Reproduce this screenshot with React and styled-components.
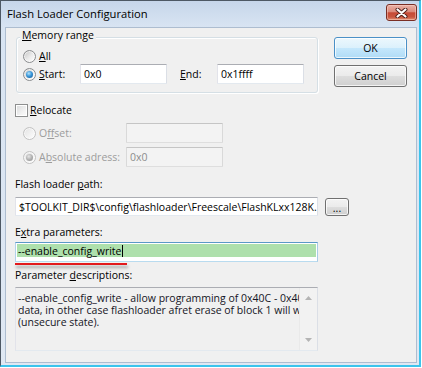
import React from 'react';
import styled, { createGlobalStyle } from 'styled-components';

const GlobalStyle = createGlobalStyle`
  html, body { margin: 0; padding: 0; background: #ffffff; }
  body {
    width: 422px; height: 368px; overflow: hidden;
    font-family: "Open Sans", "Noto Sans", sans-serif;
    -webkit-font-smoothing: antialiased;
  }
`;

const Frame = styled.div`
  box-sizing: border-box;
  width: 421px;
  height: 367px;
  display: flex;
  flex-direction: column;
  border-left: 1px solid #4d5864;
  border-top: 1px solid #4d5864;
  border-right: 2px solid #3cc4ec;
  border-bottom: 2px solid #3cc4ec;
  background: linear-gradient(180deg, #c6d6ea 0px, #d8e4f2 26px, #dfe8f3 100%);
  padding: 0 2px 2px 4px;
`;

const TitleBar = styled.div`
  height: 26px;
  flex: none;
  display: flex;
  align-items: flex-start;
  justify-content: space-between;
  margin-left: -4px;
  padding-left: 6px;
`;

const Title = styled.div`
  font-size: 11.2px;
  line-height: 14px;
  margin-top: 6px;
  color: #000;
`;

const CloseButton = styled.div`
  box-sizing: border-box;
  width: 31px;
  height: 17px;
  margin-top: 3px;
  border: 1px solid #7a2e24;
  border-radius: 3px;
  background: linear-gradient(180deg, #eab1a6 0%, #db8a7b 45%, #c64a35 52%, #c9563f 80%, #e19273 100%);
  box-shadow: inset 0 0 0 1px rgba(255, 220, 210, 0.45), 0 0 1px rgba(255,255,255,0.8);
  display: flex;
  align-items: center;
  justify-content: center;
`;

const Client = styled.div`
  flex: 1;
  box-sizing: border-box;
  border: 1px solid #adbdd0;
  background: #f0f0f0;
  padding: 9px 0 0 9px;
  display: flex;
  flex-direction: column;
  align-items: flex-start;
  font-size: 10.5px;
  line-height: 14px;
  color: #000;
`;

const TopSection = styled.div`
  display: flex;
  align-items: flex-start;
`;

const GroupBox = styled.div`
  position: relative;
  box-sizing: border-box;
  margin-left: 1px;
  width: 302px;
  height: 56px;
  border: 1px solid #d5dfe5;
  border-radius: 3px;
  box-shadow: inset 1px 1px 0 #ffffff, 1px 1px 0 #ffffff;
  padding: 11px 0 0 6px;
  display: flex;
  flex-direction: column;
  gap: 1px;
`;

const Legend = styled.span`
  position: absolute;
  top: -10px;
  left: 3px;
  padding: 0 2px;
  background: #f0f0f0;
  line-height: 14px;
`;

const Key = styled.span`
  text-decoration: underline;
  text-underline-offset: 1px;
  text-decoration-thickness: 1px;
`;

const OptionRow = styled.div`
  display: flex;
  align-items: center;
  height: ${p => p.$h || 14}px;
`;

const RadioLabel = styled.label`
  display: flex;
  align-items: center;
  gap: 3px;
  width: ${p => (p.$w ? `${p.$w}px` : 'auto')};
  flex: none;
  color: ${p => (p.$disabled ? '#9c9c9c' : '#000')};
`;

const Radio = styled.span`
  box-sizing: border-box;
  width: 13px;
  height: 13px;
  flex: none;
  border-radius: 50%;
  border: 1px solid ${p => (p.$disabled ? '#c2c2c2' : '#8a8c8e')};
  background: ${p =>
    p.$disabled
      ? 'linear-gradient(135deg, #e2e2e2 0%, #f6f6f6 70%, #fbfbfb 100%)'
      : 'linear-gradient(135deg, #c4c4c4 0%, #ececec 55%, #ffffff 100%)'};
  box-shadow: inset 0 0 0 1px rgba(255, 255, 255, 0.6);
  display: flex;
  align-items: center;
  justify-content: center;
  &::after {
    content: '';
    display: ${p => (p.$checked ? 'block' : 'none')};
    width: 7px;
    height: 7px;
    border-radius: 50%;
    background: ${p =>
      p.$disabled
        ? 'radial-gradient(circle at 40% 35%, #e6e6e6 0%, #b2b2b2 50%, #8e8e8e 100%)'
        : 'radial-gradient(circle at 40% 35%, #b4e3fb 0%, #3b98da 45%, #0c4f8c 100%)'};
  }
`;

const FieldLabel = styled.span`
  width: ${p => p.$w}px;
  margin-left: ${p => p.$ml || 0}px;
  flex: none;
`;

const TextBox = styled.div`
  box-sizing: border-box;
  width: ${p => p.$w}px;
  height: ${p => p.$h || 20}px;
  flex: none;
  border: 1px solid;
  border-color: ${p =>
    p.$disabled ? '#c5c5c5 #d9d9d9 #dedede #d9d9d9' : '#abadb3 #dbdfe6 #e3e9ef #e2e3ea'};
  border-radius: 1px;
  background: ${p => (p.$disabled ? '#f3f3f3' : '#ffffff')};
  color: ${p => (p.$disabled ? '#8d8d8d' : '#000')};
  padding: 0 3px;
  display: flex;
  align-items: center;
  overflow: hidden;
  white-space: nowrap;
`;

const FocusBox = styled.div`
  box-sizing: border-box;
  width: 303px;
  height: 20px;
  margin-top: 3px;
  border: 1px solid;
  border-color: #5b98c7 #a9cce6 #b9dbef #b2d2ea;
  background: #ffffff;
  padding: 1px;
`;

const Highlight = styled.div`
  height: 13px;
  background: #aee0ac;
  display: flex;
  align-items: center;
  padding-left: 1px;
  white-space: nowrap;
`;

const Caret = styled.span`
  width: 1px;
  height: 12px;
  background: #000;
  margin-left: 1px;
`;

const ButtonColumn = styled.div`
  display: flex;
  flex-direction: column;
  gap: 6px;
  margin-left: 16px;
`;

const Button = styled.div`
  box-sizing: border-box;
  width: ${p => p.$w || 73}px;
  height: ${p => p.$h || 22}px;
  border: 1px solid ${p => (p.$default ? '#4a90c7' : '#707070')};
  border-radius: 3px;
  background: ${p =>
    p.$default
      ? 'linear-gradient(180deg, #ecf7fd 0%, #dcf1fc 48%, #c4e7fc 52%, #b0dcf6 100%)'
      : 'linear-gradient(180deg, #f3f3f3 0%, #ebebeb 48%, #dddddd 52%, #cfcfcf 100%)'};
  box-shadow: inset 0 0 0 1px rgba(255, 255, 255, 0.75);
  display: flex;
  align-items: center;
  justify-content: center;
  color: #000;
  line-height: ${p => (p.$low ? '10px' : '14px')};
  padding-top: ${p => (p.$low ? '3px' : '0')};
  flex: none;
`;

const CheckRow = styled.label`
  display: flex;
  align-items: center;
  gap: 2px;
  height: 14px;
  margin-top: 10px;
`;

const CheckBox = styled.span`
  box-sizing: border-box;
  width: 13px;
  height: 13px;
  border: 1px solid #8e8f8f;
  background: linear-gradient(135deg, #d9dadb 0%, #f1f1f1 60%, #fdfdfd 100%);
  box-shadow: inset 0 0 0 1px #ffffff;
  flex: none;
`;

const SubGrid = styled.div`
  display: grid;
  grid-template-columns: 103px 97px;
  grid-auto-rows: 20px;
  row-gap: 4px;
  align-items: center;
  padding-left: 8px;
  margin-top: 6px;
`;

const Label = styled.div`
  margin-top: ${p => p.$mt}px;
  line-height: 14px;
`;

const PathRow = styled.div`
  display: flex;
  align-items: center;
  gap: 7px;
  margin-top: 6px;
`;

const Annotation = styled.div`
  width: 112px;
  height: 2px;
  margin-top: 1px;
  background: #e3191c;
  box-shadow: 1px 3px 3px rgba(70, 70, 70, 0.45);
`;

const DescBox = styled.div`
  box-sizing: border-box;
  width: 303px;
  height: 64px;
  margin-top: 5px;
  border: 1px solid;
  border-color: #abadb3 #dbdfe6 #e3e9ef #e2e3ea;
  background: #f0f0f0;
  display: flex;
`;

const DescText = styled.div`
  flex: 1;
  overflow: hidden;
  white-space: nowrap;
  padding: 4px 0 0 2px;
  line-height: 12px;
  color: #151525;
`;

const ScrollBar = styled.div`
  width: 17px;
  flex: none;
  background: #f2f2f2;
  border-left: 1px solid #e9e9e9;
  display: flex;
  flex-direction: column;
  justify-content: space-between;
  align-items: center;
  padding: 8px 0 8px;
`;

const Arrow = ({ up }) => (
  <svg width="7" height="4" viewBox="0 0 7 4">
    <path d={up ? 'M0 4 L3.5 0 L7 4 Z' : 'M0 0 L3.5 4 L7 0 Z'} fill="#b4b4b4" />
  </svg>
);

export default function App() {
  return (
    <>
      <GlobalStyle />
      <Frame>
        <TitleBar>
          <Title>Flash Loader Configuration</Title>
          <CloseButton>
            <svg width="13" height="10" viewBox="0 0 13 10">
              <path d="M2.5 1.5 L10.5 8.5 M10.5 1.5 L2.5 8.5" stroke="#4a1c17" strokeWidth="4" strokeLinecap="round" />
              <path d="M2.5 1.5 L10.5 8.5 M10.5 1.5 L2.5 8.5" stroke="#ffffff" strokeWidth="2.2" strokeLinecap="round" />
            </svg>
          </CloseButton>
        </TitleBar>
        <Client>
          <TopSection>
            <GroupBox>
              <Legend><Key>M</Key>emory range</Legend>
              <OptionRow>
                <RadioLabel>
                  <Radio />
                  <span><Key>A</Key>ll</span>
                </RadioLabel>
              </OptionRow>
              <OptionRow $h={20}>
                <RadioLabel $w={57}>
                  <Radio $checked />
                  <span><Key>S</Key>tart:</span>
                </RadioLabel>
                <TextBox $w={87}>0x0</TextBox>
                <FieldLabel $w={37} $ml={13}><Key>E</Key>nd:</FieldLabel>
                <TextBox $w={87}>0x1ffff</TextBox>
              </OptionRow>
            </GroupBox>
            <ButtonColumn>
              <Button $default>OK</Button>
              <Button>Cancel</Button>
            </ButtonColumn>
          </TopSection>

          <CheckRow>
            <CheckBox />
            <span><Key>R</Key>elocate</span>
          </CheckRow>

          <SubGrid>
            <RadioLabel $disabled>
              <Radio $disabled />
              <span>O<Key>f</Key>fset:</span>
            </RadioLabel>
            <TextBox $w={97} $disabled />
            <RadioLabel $disabled>
              <Radio $disabled $checked />
              <span>A<Key>b</Key>solute adress:</span>
            </RadioLabel>
            <TextBox $w={97} $disabled>0x0</TextBox>
          </SubGrid>

          <Label $mt={10}>Flash loader <Key>p</Key>ath:</Label>
          <PathRow>
            <TextBox $w={303} $h={19}>$TOOLKIT_DIR$\config\flashloader\Freescale\FlashKLxx128K.</TextBox>
            <Button $w={24} $h={18} $low>...</Button>
          </PathRow>

          <Label $mt={9}>E<Key>x</Key>tra parameters:</Label>
          <FocusBox>
            <Highlight>
              --enable_config_write<Caret />
            </Highlight>
          </FocusBox>
          <Annotation />

          <Label $mt={3}>Parameter <Key>d</Key>escriptions:</Label>
          <DescBox>
            <DescText>
              <div>--enable_config_write - allow programming of 0x40C - 0x40F flash configuration</div>
              <div>data, in other case flashloader afret erase of block 1 will write 0xFFFF_FFFE</div>
              <div>(unsecure state).</div>
            </DescText>
            <ScrollBar>
              <Arrow up />
              <Arrow />
            </ScrollBar>
          </DescBox>
        </Client>
      </Frame>
    </>
  );
}
